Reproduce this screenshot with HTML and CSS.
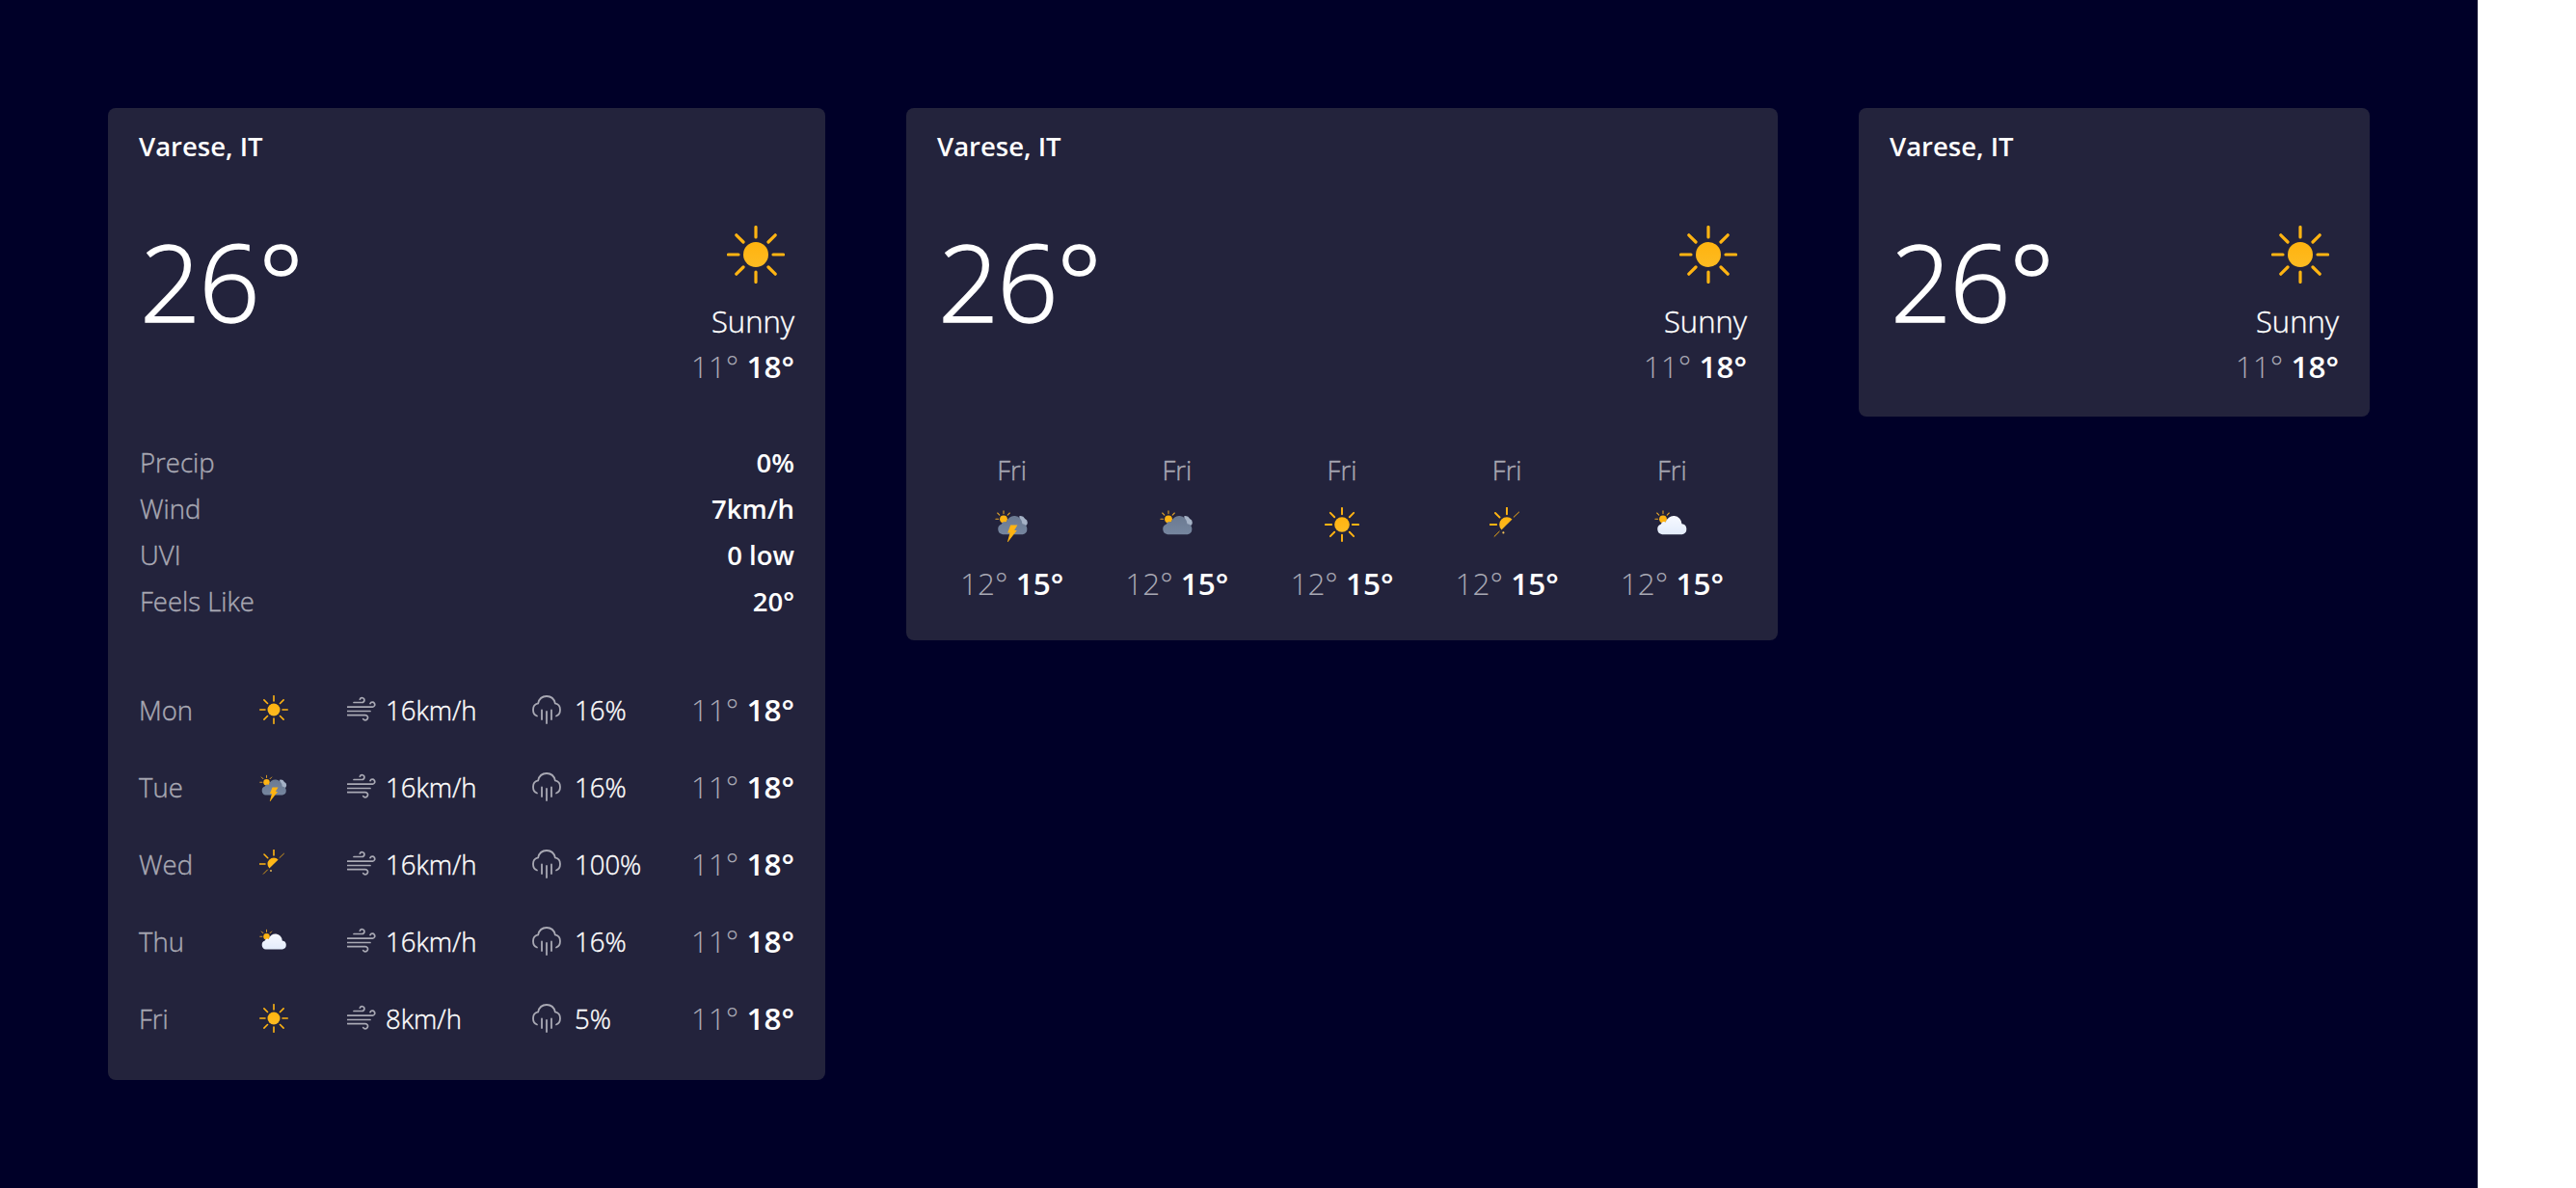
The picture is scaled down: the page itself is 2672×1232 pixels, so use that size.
FILE: index.html
```html
<!DOCTYPE html>
<html lang="en">
<head>
<meta charset="utf-8">
<title>Weather</title>
<link rel="stylesheet" href="styles.css">
</head>
<body>
<svg class="defs" aria-hidden="true">
  <defs>
    <linearGradient id="sunfill" x1="0" y1="0" x2="0" y2="1"><stop offset="0" stop-color="#ffb30f"/><stop offset="1" stop-color="#fdbb22"/></linearGradient>
    <linearGradient id="greyfill" x1="0" y1="0" x2="0" y2="1"><stop offset="0" stop-color="#6b7a92"/><stop offset="1" stop-color="#76869f"/></linearGradient>
    <linearGradient id="whitefill" x1="0" y1="0" x2="0" y2="1"><stop offset="0" stop-color="#f7f9ff"/><stop offset="1" stop-color="#e3ecfb"/></linearGradient>
    <symbol id="sun" viewBox="0 0 60 60">
      <circle cx="30" cy="30" r="13" fill="url(#sunfill)"/>
      <path d="M30 1.5V12M30 48V58.5M1.5 30H12M48 30H58.5M9.8 9.8L17 17M43 43L50.2 50.2M50.2 9.8L43 17M17 43L9.8 50.2" stroke="#ffb412" stroke-width="3.2" stroke-linecap="round" fill="none"/>
    </symbol>
    <symbol id="halfsun" viewBox="0 0 60 60">
      <path d="M39.2 20.8A13 13 0 1 0 20.8 39.2Z" fill="url(#sunfill)"/>
      <path d="M30 1V12M1 30H12M10 10L17.5 17.5" stroke="#ffb412" stroke-width="3.2" stroke-linecap="round" fill="none"/>
      <path d="M42 17L51 8.5M17 42L8.5 50.5" stroke="#ffb412" stroke-width="1.6" stroke-linecap="round" fill="none"/>
      <circle cx="24" cy="44" r="1.8" fill="#f4c35a"/>
    </symbol>
    <symbol id="smallsun" viewBox="0 0 60 60">
      <circle cx="15" cy="20.5" r="6.5" fill="#ffb412"/>
      <path d="M15 6.5V11M4.5 10L8 13.5M25.5 10L22 13.5M1.5 20.5H6" stroke="#e3a32a" stroke-width="1.8" stroke-linecap="round" fill="none"/>
    </symbol>
    <symbol id="cloudwhite" viewBox="0 0 60 60">
      <use href="#smallsun"/>
      <path d="M13.5 47A9.2 9.2 0 0 1 11.5 29.2A5 5 0 0 1 19.5 26A14.2 14.2 0 0 1 47.5 28.8A9.2 9.2 0 0 1 48 47Z" fill="url(#whitefill)"/>
    </symbol>
    <symbol id="cloudgrey" viewBox="0 0 60 60">
      <use href="#smallsun"/>
      <path d="M42 15.5A9 9 0 0 1 52 20A7 7 0 0 1 52 33L44 30Z" fill="#a5b2c6"/>
      <path d="M13.5 47A9.2 9.2 0 0 1 11.5 29.2A5 5 0 0 1 19.5 26A14.2 14.2 0 0 1 47.5 28.8A9.2 9.2 0 0 1 48 47Z" fill="url(#greyfill)"/>
    </symbol>
    <symbol id="thunder" viewBox="0 0 60 60">
      <use href="#cloudgrey"/>
      <path d="M27 31H39L33.5 40H38L21 62L26 44H22Z" fill="#ffb412"/>
    </symbol>
    <symbol id="wind" viewBox="0 0 30 30">
      <path d="M7 7.5H15.5A2.4 2.4 0 1 0 13.3 4.2M0.5 12.2H26.5A2.5 2.5 0 1 0 24 8.6M0.5 16.5H24M0.5 20.6H19A2.6 2.6 0 1 1 16.7 24.6" stroke="#a9a9b4" stroke-width="1.7" stroke-linecap="round" fill="none"/>
    </symbol>
    <symbol id="rain" viewBox="0 0 30 30">
      <path d="M5 21.5C2.2 20.5 1 18 1 15C1 11.5 3 9 6.2 8.4C7.2 3.8 10.6 1 15 1C19.4 1 22.8 3.8 23.8 8.4C27 9 29 11.5 29 15C29 18 27.8 20.5 25 21.5" stroke="#a9a9b4" stroke-width="1.8" stroke-linecap="round" fill="none"/>
      <path d="M10 15.5V25M15 17V29M20 15.5V25" stroke="#a9a9b4" stroke-width="1.8" stroke-linecap="round" fill="none"/>
    </symbol>
  </defs>
</svg>
<main class="stage">

  <section class="card card-full">
    <h2 class="city">Varese, IT</h2>
    <div class="now">
      <div class="now-temp">26°</div>
      <div class="now-side">
        <svg class="icon-main"><use href="#sun"/></svg>
        <div class="cond">Sunny</div>
        <div class="range"><span class="lo">11°</span> <b>18°</b></div>
      </div>
    </div>
    <dl class="details">
      <div class="detail"><dt>Precip</dt><dd>0%</dd></div>
      <div class="detail"><dt>Wind</dt><dd>7km/h</dd></div>
      <div class="detail"><dt>UVI</dt><dd>0 low</dd></div>
      <div class="detail"><dt>Feels Like</dt><dd>20°</dd></div>
    </dl>
    <div class="days">
      <div class="day"><span class="day-name">Mon</span><svg class="icon-sm"><use href="#sun"/></svg><span class="metric"><svg class="icon-sm"><use href="#wind"/></svg>16km/h</span><span class="metric metric-rain"><svg class="icon-sm"><use href="#rain"/></svg>16%</span><span class="range"><span class="lo">11°</span> <b>18°</b></span></div>
      <div class="day"><span class="day-name">Tue</span><svg class="icon-sm"><use href="#thunder"/></svg><span class="metric"><svg class="icon-sm"><use href="#wind"/></svg>16km/h</span><span class="metric metric-rain"><svg class="icon-sm"><use href="#rain"/></svg>16%</span><span class="range"><span class="lo">11°</span> <b>18°</b></span></div>
      <div class="day"><span class="day-name">Wed</span><svg class="icon-sm"><use href="#halfsun"/></svg><span class="metric"><svg class="icon-sm"><use href="#wind"/></svg>16km/h</span><span class="metric metric-rain"><svg class="icon-sm"><use href="#rain"/></svg>100%</span><span class="range"><span class="lo">11°</span> <b>18°</b></span></div>
      <div class="day"><span class="day-name">Thu</span><svg class="icon-sm"><use href="#cloudwhite"/></svg><span class="metric"><svg class="icon-sm"><use href="#wind"/></svg>16km/h</span><span class="metric metric-rain"><svg class="icon-sm"><use href="#rain"/></svg>16%</span><span class="range"><span class="lo">11°</span> <b>18°</b></span></div>
      <div class="day"><span class="day-name">Fri</span><svg class="icon-sm"><use href="#sun"/></svg><span class="metric"><svg class="icon-sm"><use href="#wind"/></svg>8km/h</span><span class="metric metric-rain"><svg class="icon-sm"><use href="#rain"/></svg>5%</span><span class="range"><span class="lo">11°</span> <b>18°</b></span></div>
    </div>
  </section>

  <section class="card card-week">
    <h2 class="city">Varese, IT</h2>
    <div class="now">
      <div class="now-temp">26°</div>
      <div class="now-side">
        <svg class="icon-main"><use href="#sun"/></svg>
        <div class="cond">Sunny</div>
        <div class="range"><span class="lo">11°</span> <b>18°</b></div>
      </div>
    </div>
    <div class="strip">
      <div class="strip-item"><span class="day-name">Fri</span><svg class="icon-md"><use href="#thunder"/></svg><span class="range"><span class="lo">12°</span> <b>15°</b></span></div>
      <div class="strip-item"><span class="day-name">Fri</span><svg class="icon-md"><use href="#cloudgrey"/></svg><span class="range"><span class="lo">12°</span> <b>15°</b></span></div>
      <div class="strip-item"><span class="day-name">Fri</span><svg class="icon-md"><use href="#sun"/></svg><span class="range"><span class="lo">12°</span> <b>15°</b></span></div>
      <div class="strip-item"><span class="day-name">Fri</span><svg class="icon-md"><use href="#halfsun"/></svg><span class="range"><span class="lo">12°</span> <b>15°</b></span></div>
      <div class="strip-item"><span class="day-name">Fri</span><svg class="icon-md"><use href="#cloudwhite"/></svg><span class="range"><span class="lo">12°</span> <b>15°</b></span></div>
    </div>
  </section>

  <section class="card card-small">
    <h2 class="city">Varese, IT</h2>
    <div class="now">
      <div class="now-temp">26°</div>
      <div class="now-side">
        <svg class="icon-main"><use href="#sun"/></svg>
        <div class="cond">Sunny</div>
        <div class="range"><span class="lo">11°</span> <b>18°</b></div>
      </div>
    </div>
  </section>

</main>
</body>
</html>
```

FILE: styles.css
```css
html, body {
  margin: 0;
  padding: 0;
  height: 100%;
  background: #ffffff;
}

body {
  font-family: "Open Sans", "Noto Sans", "Liberation Sans", sans-serif;
  color: #ffffff;
  overflow: hidden;
}

.defs {
  position: absolute;
  width: 0;
  height: 0;
}

.stage {
  box-sizing: border-box;
  width: 2570px;
  height: 1232px;
  background: #000028;
  padding: 112px 0 0 112px;
  display: flex;
  align-items: flex-start;
  gap: 84px;
}

.card {
  box-sizing: border-box;
  background: #23233c;
  border-radius: 8px;
  padding: 20px 32px 24px;
}

.card-full { width: 744px; }
.card-week { width: 904px; }
.card-small { width: 530px; }

.city {
  margin: 0;
  font-size: 27.5px;
  line-height: 40px;
  font-weight: 600;
}

.now {
  display: flex;
  justify-content: space-between;
  align-items: flex-start;
  padding-bottom: 4px;
}

.now-temp {
  font-size: 111px;
  line-height: 120px;
  font-weight: 300;
  -webkit-text-stroke: 1.4px #ffffff;
  margin-top: 59px;
  padding-left: 1px;
  letter-spacing: -2px;
}

.now-side {
  display: flex;
  flex-direction: column;
  align-items: flex-end;
  margin-top: 62px;
}

.icon-main {
  width: 60px;
  height: 60px;
  margin: 0 10px 16px 0;
}

.cond {
  font-size: 31px;
  line-height: 46px;
  font-weight: 300;
  -webkit-text-stroke: 0.4px #ffffff;
}

.range {
  font-size: 31.5px;
  line-height: 48px;
  font-weight: 300;
  white-space: nowrap;
}

.range b {
  font-weight: 600;
}

.lo {
  color: #a9a9b4;
}

.details {
  margin: 48px 0 0;
}

.detail {
  display: flex;
  justify-content: space-between;
  font-size: 27.5px;
  line-height: 48px;
}

.detail dt {
  color: #a9a9b4;
  font-weight: 300;
  -webkit-text-stroke: 0.4px #a9a9b4;
  padding-left: 1px;
}

.detail dd {
  margin: 0;
  font-weight: 600;
}

.days {
  margin-top: 48px;
}

.day {
  display: grid;
  grid-template-columns: 125px 91px 192px 1fr auto;
  align-items: center;
  height: 80px;
}

.day-name {
  color: #a9a9b4;
  font-size: 27.5px;
  font-weight: 300;
  -webkit-text-stroke: 0.4px #a9a9b4;
}

.metric {
  display: flex;
  align-items: center;
  gap: 10px;
  font-size: 27.5px;
  font-weight: 300;
  -webkit-text-stroke: 0.4px #ffffff;
}

.metric-rain {
  gap: 14px;
}

.icon-sm {
  width: 30px;
  height: 30px;
}

.icon-md {
  width: 36px;
  height: 36px;
  margin-top: 14px;
}

.strip {
  display: grid;
  grid-template-columns: repeat(5, 1fr);
  column-gap: 16px;
  margin-top: 48px;
}

.strip-item {
  display: flex;
  flex-direction: column;
  align-items: center;
  padding: 8px 0 11px;
}

.strip-item .day-name {
  line-height: 48px;
}

.strip-item .range {
  margin-top: 19px;
  line-height: 48px;
}
```
